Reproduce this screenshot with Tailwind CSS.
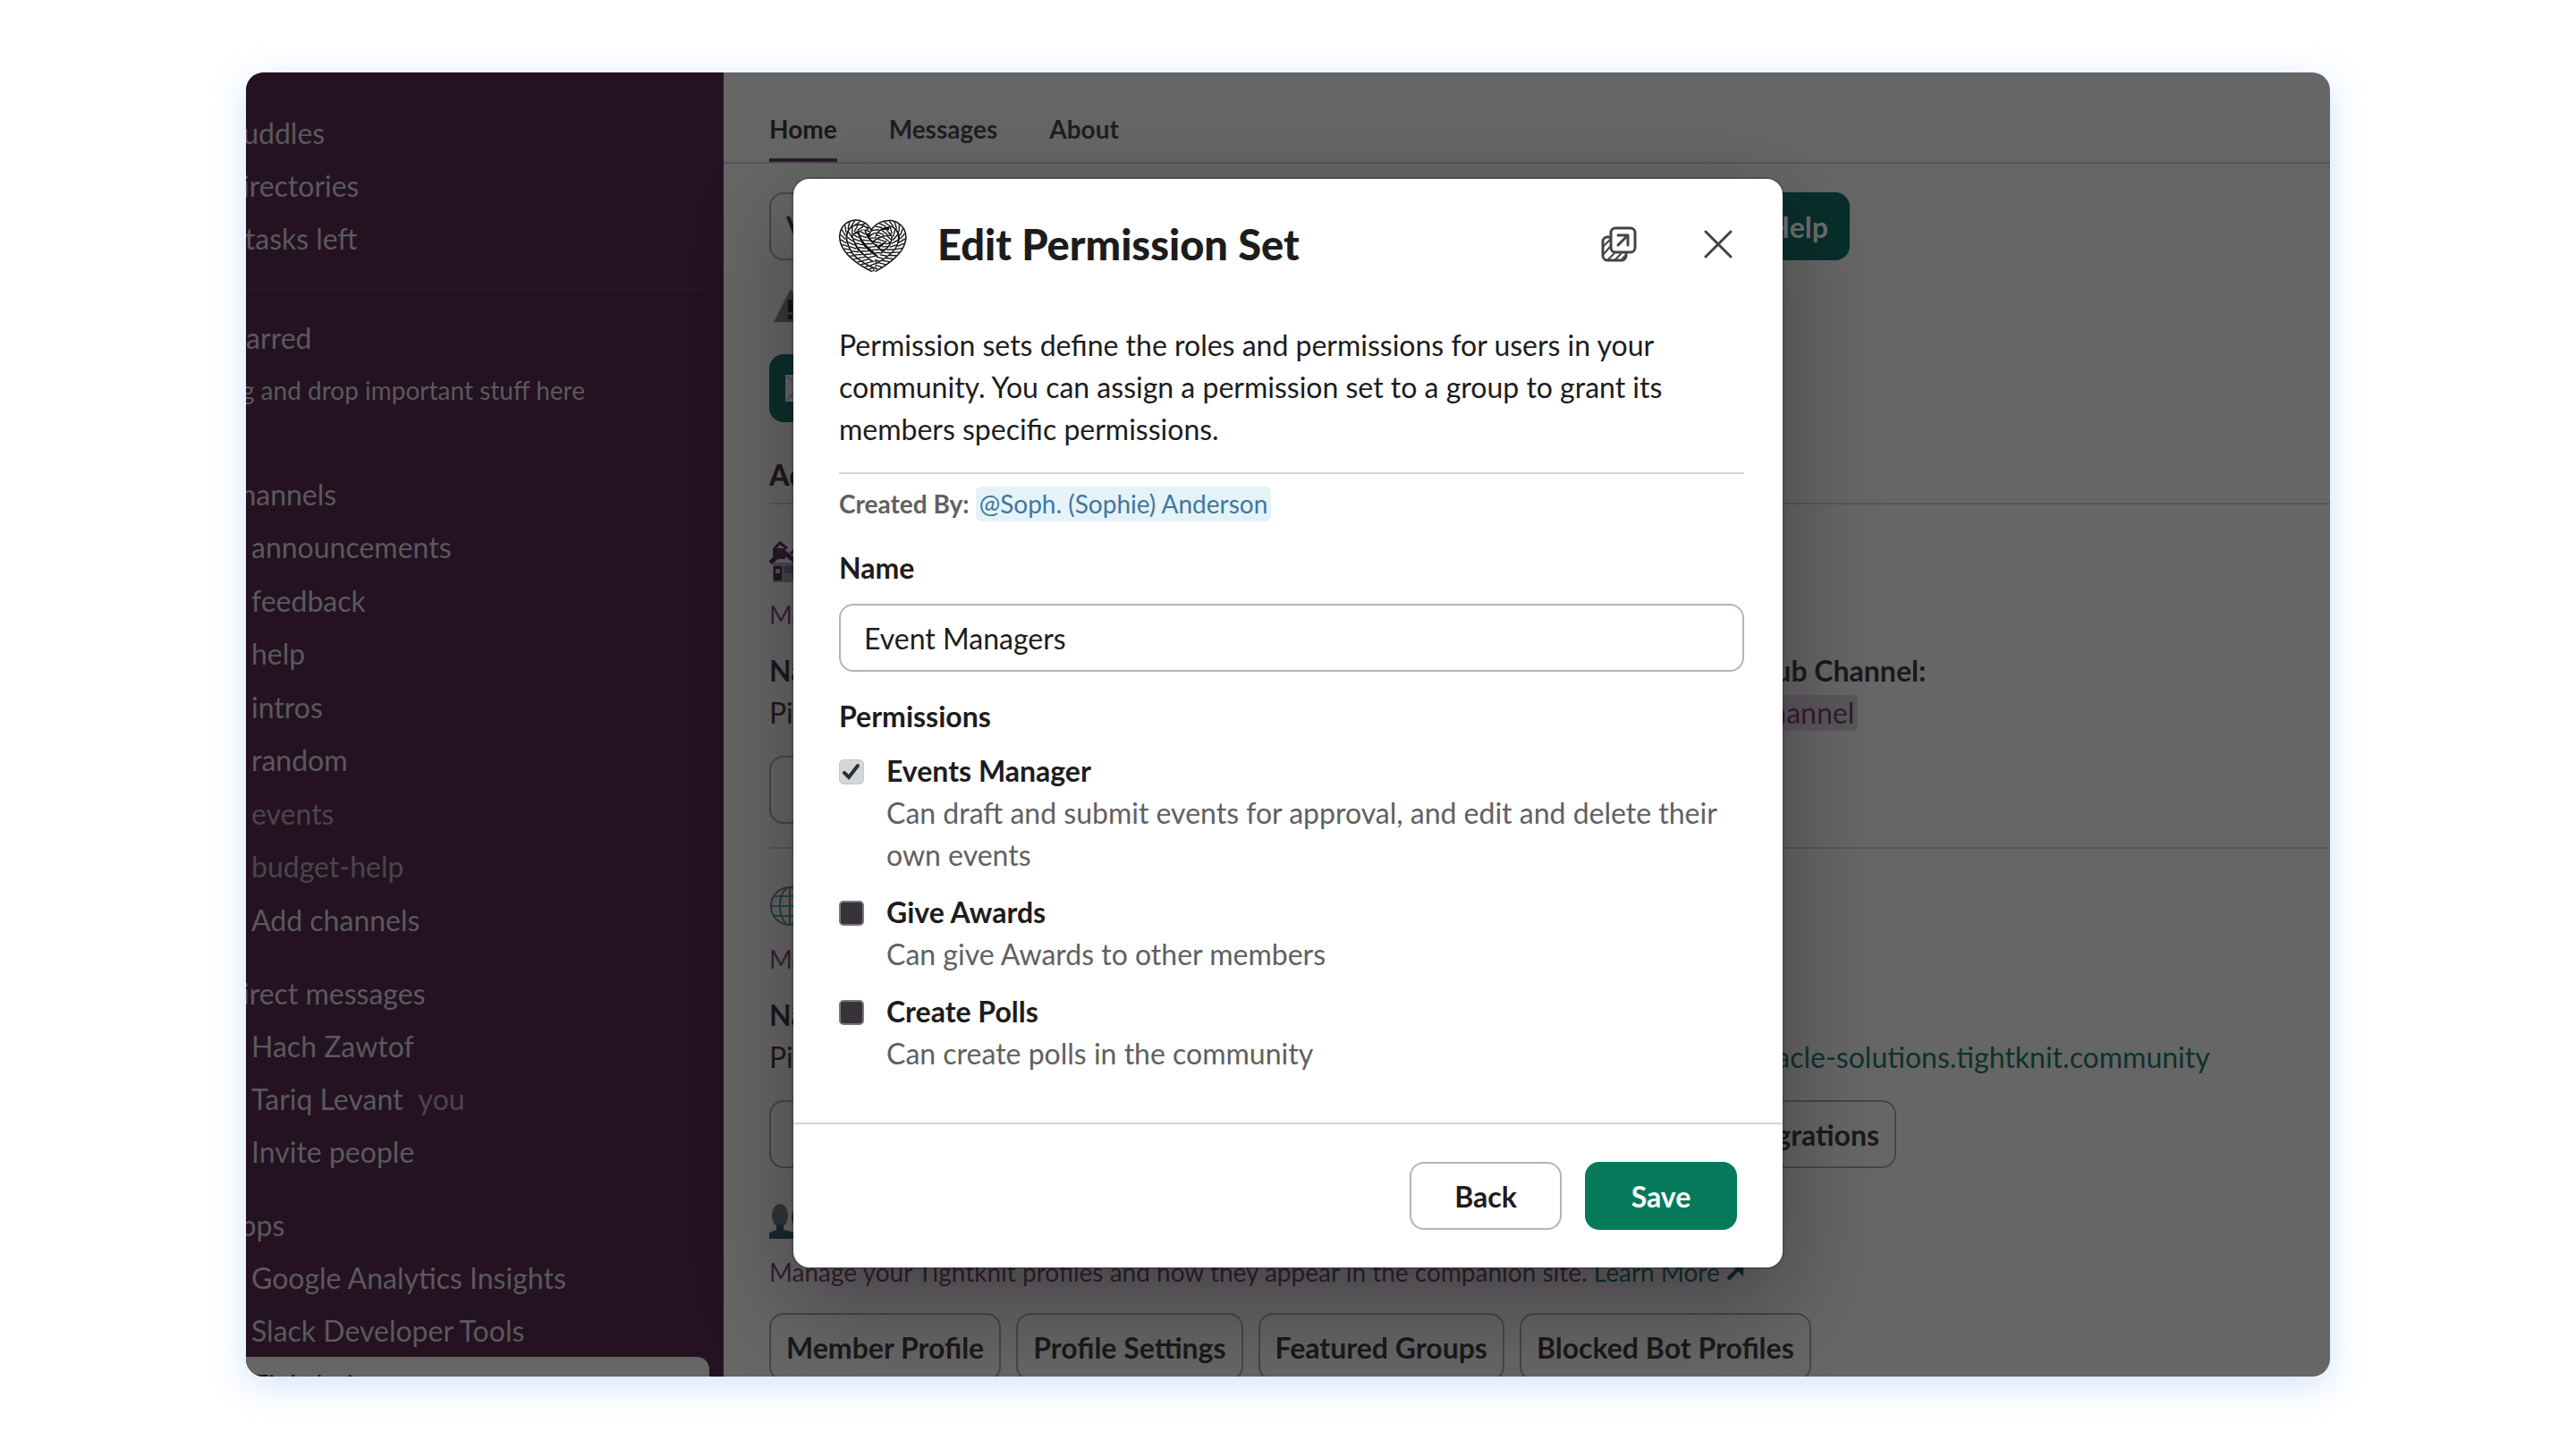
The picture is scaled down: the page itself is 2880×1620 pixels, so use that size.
<!DOCTYPE html>
<html lang="en">
<head>
  <meta charset="UTF-8">
  <meta name="viewport" content="width=device-width, initial-scale=1.0">
  <title>Edit Permission Set</title>
  <script src="https://cdn.jsdelivr.net/npm/@tailwindcss/browser@4"></script>
</head>
<body class="bg-white h-screen px-[275px] py-[81px] font-['Lato',sans-serif] text-[32px] leading-[47px]">

  <div class="relative h-full flex overflow-hidden rounded-[20px] bg-[#666666] text-[#1a191b] shadow-[0_10px_40px_rgba(96,155,250,0.28)]">

    <!-- Sidebar -->
    <nav class="w-[534px] shrink-0 bg-[#241222] text-[#5b595b] pt-[38px] overflow-hidden whitespace-nowrap">
      <ul class="-ml-7">
        <li class="h-[59px] flex items-center">Huddles</li>
        <li class="h-[59px] flex items-center">Directories</li>
        <li class="h-[59px] flex items-center">2 tasks left</li>
      </ul>
      <hr class="mt-[27px] mb-[23px] mr-6 border-t-2 border-[#2a1829]">

      <section>
        <h2 class="h-[59px] flex items-center -ml-7">Starred</h2>
        <p class="h-[59px] flex items-center -ml-[50px] text-[28px]">Drag and drop important stuff here</p>
      </section>

      <section class="mt-[57px]">
        <h2 class="h-[59px] flex items-center -ml-7">Channels</h2>
        <ul class="h-[476px] grid items-center pl-[6px]">
          <li>announcements</li>
          <li>feedback</li>
          <li>help</li>
          <li>intros</li>
          <li>random</li>
          <li class="text-[#4a464a]">events</li>
          <li class="text-[#4a464a]">budget-help</li>
          <li>Add channels</li>
        </ul>
      </section>

      <section class="mt-[23px]">
        <h2 class="h-[59px] flex items-center -ml-7">Direct messages</h2>
        <ul class="pl-[6px]">
          <li class="h-[59px] flex items-center">Hach Zawtof</li>
          <li class="h-[59px] flex items-center gap-[17px]">Tariq Levant <span class="text-[#4a464a]">you</span></li>
          <li class="h-[59px] flex items-center">Invite people</li>
        </ul>
      </section>

      <section class="mt-[23px]">
        <h2 class="h-[59px] flex items-center -ml-7">Apps</h2>
        <ul>
          <li class="h-[59px] flex items-center pl-[6px]">Google Analytics Insights</li>
          <li class="h-[59px] flex items-center pl-[6px]">Slack Developer Tools</li>
          <li class="h-[62px] flex items-center pl-[6px] mr-[16px] rounded-r-[14px] bg-[#666666] text-[#1a191b]">Tightknit</li>
        </ul>
      </section>
    </nav>

    <!-- App home -->
    <main class="flex-1 min-w-0 overflow-hidden whitespace-nowrap">
      <div class="h-[102px] pl-[51px] flex items-end gap-[58px] border-b-2 border-[#555456] text-[28px] font-bold">
        <a href="#" class="h-[60px] border-b-4 border-[#2f1a2f]">Home</a>
        <a href="#" class="h-[60px] text-[#211d22]">Messages</a>
        <a href="#" class="h-[60px] text-[#211d22]">About</a>
      </div>

      <div class="pl-[51px]">
        <div class="mt-8 w-[1208px] flex justify-between font-bold">
          <button class="h-[76px] px-[17px] rounded-[16px] border-2 border-[#474547]">View Site</button>
          <button class="h-[76px] px-6 rounded-[16px] bg-[#082f2a] text-[#6b6f6e]">Get Help</button>
        </div>

        <div class="mt-[27px] h-[47px] flex items-center">
          <svg class="w-[46px] h-[40px]" viewBox="0 0 46 40"><path d="M24 1 44 38H5Z" fill="#39363a"/><path d="M21 13h5v14h-5zM21 30h5v5h-5z" fill="#111"/></svg>
        </div>

        <button class="mt-[31px] h-[76px] w-[320px] pl-[18px] rounded-[16px] bg-[#082f2a] flex items-center">
          <svg class="w-[44px] h-[30px]" viewBox="0 0 44 30"><path d="M0 0h44v30H0z" fill="#6a686b"/><path d="M2 2 22 18 42 2M2 28 16 14M42 28 28 14" fill="none" stroke="#504e52" stroke-width="2"/></svg>
        </button>

        <h2 class="mt-[35px] pb-2 border-b-2 border-[#565557] font-black">Admin</h2>

        <section class="pt-[40px]">
          <div class="h-[47px] flex items-center">
            <svg class="w-[60px] h-[46px]" viewBox="0 0 60 46">
              <g fill="none" stroke="#251525" stroke-width="5"><path d="M6 8 12 2 20 8M24 14 34 4 44 14" stroke-width="3"/><path d="M1 24 16 12 31 24 46 12 59 24"/></g>
              <path d="M4 8h14v12H4z" fill="#251a26"/><path d="M4 24h24v22H4z" fill="#494549"/><path d="M5 28h9v16H5z" fill="#1a181b"/><path d="M7 31h5v5H7z" fill="#555"/><path d="M17 28h10v8H17z" fill="#32303c"/>
            </svg>
          </div>
          <p class="mt-[13px] text-[28px] text-[#302332]">Manage your community channels.</p>
          <div class="mt-[15px] grid grid-cols-[1100px_1fr]">
            <div><b>Name:</b><br>Pinnacle Solutions</div>
            <div><b>Hub Channel:</b><br><span class="inline-block h-10 leading-[40px] px-1 rounded-[6px] bg-[#5a575b] text-[#301c32]">channel</span></div>
          </div>
          <button class="mt-[25px] h-[76px] w-[300px] rounded-[16px] border-2 border-[#474547] font-bold">Edit</button>
        </section>
        <hr class="mt-[26px] border-t-2 border-[#565557]">

        <section class="pt-[40px]">
          <div class="h-[47px] flex items-center">
            <svg class="w-[46px] h-[46px]" viewBox="0 0 46 46" fill="none" stroke="#2d3738" stroke-width="2"><circle cx="23" cy="23" r="21"/><ellipse cx="23" cy="23" rx="11" ry="21"/><path d="M23 2v42"/><path d="M2 23h42M6 12h34M6 34h34" stroke="#164d43"/></svg>
          </div>
          <p class="mt-[13px] text-[28px] text-[#302332]">Manage your companion site.</p>
          <div class="mt-[15px] grid grid-cols-[1064px_1fr]">
            <div><b>Name:</b><br>Pinnacle Solutions</div>
            <div><b>URL:</b><br><a href="#" class="text-[#0c322c]">pinnacle-solutions.tightknit.community</a></div>
          </div>
          <div class="mt-[25px] w-[1260px] flex justify-between font-bold">
            <button class="h-[76px] w-[300px] rounded-[16px] border-2 border-[#474547]">Site</button>
            <button class="h-[76px] px-[17px] rounded-[16px] border-2 border-[#474547]">Integrations</button>
          </div>
        </section>

        <section class="pt-[32px]">
          <div class="h-[47px] flex items-end">
            <svg class="w-[46px] h-[40px]" viewBox="0 0 46 40" fill="#14292b"><ellipse cx="12" cy="14" rx="9" ry="13" fill="#2f3537"/><path d="M8 24h8v6l14 3v7H0v-7l8-3z"/><ellipse cx="34" cy="16" rx="9" ry="12"/></svg>
          </div>
          <p class="mt-[14px] text-[28px] text-[#2d1f2e]">Manage your Tightknit profiles and how they appear in the companion site. <a href="#" class="text-[#0c322c]">Learn More <svg class="inline w-[20px] h-[20px] -mt-2" viewBox="0 0 20 20"><path d="M2 18 14 6" stroke="#0c2422" stroke-width="4"/><path d="M6 2h13v13z" fill="#0c2422"/></svg></a></p>
          <div class="mt-[22px] flex gap-[17px] font-bold">
            <button class="h-[76px] px-[17px] rounded-[16px] border-2 border-[#474547]">Member Profile</button>
            <button class="h-[76px] px-[17px] rounded-[16px] border-2 border-[#474547]">Profile Settings</button>
            <button class="h-[76px] px-[17px] rounded-[16px] border-2 border-[#474547]">Featured Groups</button>
            <button class="h-[76px] px-[17px] rounded-[16px] border-2 border-[#474547]">Blocked Bot Profiles</button>
          </div>
        </section>
      </div>
    </main>

    <!-- Modal -->
    <div class="absolute inset-0 flex items-center justify-center pb-[3px]">
      <form class="w-[1106px] bg-white rounded-[18px] text-[#1d1c1d] shadow-[0_0_0_2px_rgba(29,28,29,0.2),0_38px_102px_rgba(20,10,22,0.38)]" onsubmit="return false">
        <header class="h-[162px] pt-[18px] pl-[51px] pr-[56px]">
          <div class="h-[110px] flex items-center">
            <svg id="logo" class="mt-1 w-[76px] h-[62px]" viewBox="14 18 228 184"></svg>
            <h1 class="ml-[34px] text-[47px] leading-[56px] font-black">Edit Permission Set</h1>
            <button type="button" aria-label="Open in new window" class="ml-auto">
              <svg class="w-10 h-10" viewBox="0 0 40 40" fill="none" stroke="#454245" stroke-width="3" stroke-linecap="round" stroke-linejoin="round">
                <path d="M9 12H7a5 5 0 0 0-5 5v16a5 5 0 0 0 5 5h16a5 5 0 0 0 5-5v-2"/>
                <path d="M3 22 10 15M3 31 10 23M8 37 15 30M16 37 22 31M24 36 27 33" stroke-width="2"/>
                <rect x="11" y="2" width="27" height="27" rx="5"/>
                <path d="M19 10h11v11M30 10 19 21"/>
              </svg>
            </button>
            <button type="button" aria-label="Close" class="ml-[75px]">
              <svg class="w-8 h-8" viewBox="0 0 32 32" fill="none" stroke="#454245" stroke-width="3" stroke-linecap="round"><path d="M2 2 30 30M30 2 2 30"/></svg>
            </button>
          </div>
        </header>

        <div class="pl-[51px] pr-[43px]">
          <p>Permission sets define the roles and permissions for users in your community. You can assign a permission set to a group to grant its members specific permissions.</p>
          <hr class="mt-[25px] border-t-2 border-[#d3d7da]">
          <p class="mt-[10px] text-[28px] text-[#616061]"><b>Created By:</b> <a href="#" class="inline-block h-[39px] leading-[39px] px-1 rounded-[6px] bg-[#e5f3f9] text-[#3f779d]">@Soph. (Sophie) Anderson</a></p>

          <label for="name" class="block mt-6 font-bold">Name</label>
          <input id="name" type="text" value="Event Managers" class="block mt-[17px] w-full h-[76px] px-[26px] rounded-[16px] border-2 border-[#b0b6b8]">

          <fieldset class="mt-[26px]">
            <legend class="font-bold">Permissions</legend>
            <div class="mt-[14px] flex flex-col gap-[17px]">
              <div class="flex gap-[25px]">
                <div class="relative mt-[11px] w-7 h-7 shrink-0">
                  <input id="events" type="checkbox" checked class="block appearance-none w-7 h-7 rounded-[5px] border border-[#c3cacc] bg-[#d2d6d8]">
                  <svg class="absolute inset-0 w-7 h-7 pointer-events-none" viewBox="0 0 28 28"><path d="M6 15 11 20 21 7" fill="none" stroke="#2f2c33" stroke-width="4" stroke-linecap="round"/></svg>
                </div>
                <label for="events"><b>Events Manager</b><span class="block text-[#616061]">Can draft and submit events for approval, and edit and delete their own events</span></label>
              </div>
              <div class="flex gap-[25px]">
                <input id="awards" type="checkbox" class="appearance-none mt-[11px] w-7 h-7 shrink-0 rounded-[5px] border-2 border-[#78777a] bg-[#383239]">
                <label for="awards"><b>Give Awards</b><span class="block text-[#616061]">Can give Awards to other members</span></label>
              </div>
              <div class="flex gap-[25px]">
                <input id="polls" type="checkbox" class="appearance-none mt-[11px] w-7 h-7 shrink-0 rounded-[5px] border-2 border-[#78777a] bg-[#383239]">
                <label for="polls"><b>Create Polls</b><span class="block text-[#616061]">Can create polls in the community</span></label>
              </div>
            </div>
          </fieldset>
        </div>

        <footer class="mt-[54px] pt-[42px] pb-[42px] px-[51px] flex justify-end gap-[26px] border-t-2 border-[#d3d7da] font-bold">
          <button type="button" class="w-[170px] h-[76px] rounded-[16px] border-2 border-[#b0b6b8]">Back</button>
          <button type="submit" class="w-[170px] h-[76px] rounded-[16px] bg-[#057a5b] text-white">Save</button>
        </footer>
      </form>
    </div>
  </div>

  <script>
    // rope heart: every strand is a black outline, a white core and slanted twists
    const strands = [
      { d: 'M122 88 C140 70 160 62 186 66', slant: 40 },
      { d: 'M126 112 C145 92 165 84 192 86', slant: 40 },
      { d: 'M140 134 C160 122 172 112 182 100', slant: 40 },
      { d: 'M126 76 C134 46 165 33 190 36 C220 42 234 70 224 98 C216 126 188 154 130 186', slant: 45 },
      { d: 'M182 54 C208 62 206 92 194 112 C178 134 156 148 126 162', slant: 45 },
      { d: 'M114 66 C102 38 78 31 60 36 C34 42 22 68 30 96 C40 128 78 160 130 186', slant: -45 },
      { d: 'M104 62 C92 46 68 46 56 62 C46 78 52 104 68 128 C86 148 108 162 136 174', slant: -45 },
      { d: 'M68 70 C74 92 88 116 106 132 C114 140 126 148 136 154', slant: -45 },
      { d: 'M90 58 C94 80 108 98 126 113 C136 121 144 128 152 138', slant: -45 }
    ];
    const svg = document.getElementById('logo');

    function draw(d, color, width) {
      const p = document.createElementNS('http://www.w3.org/2000/svg', 'path');
      p.setAttribute('d', d);
      p.setAttribute('fill', 'none');
      p.setAttribute('stroke', color);
      p.setAttribute('stroke-width', width);
      svg.appendChild(p);
      return p;
    }

    draw('M128 194 C70 170 22 120 22 76 C22 34 90 18 124 64 C160 18 232 34 232 78 C232 120 186 170 128 194Z', '#111', 4).setAttribute('fill', '#111');
    strands.forEach(({ d, slant }) => {
      draw(d, '#111', 27);
      const core = draw(d, '#fff', 18);
      const length = core.getTotalLength();
      for (let s = 6; s < length; s += 15) {
        const a = core.getPointAtLength(s - 1);
        const b = core.getPointAtLength(s + 1);
        const angle = Math.atan2(b.y - a.y, b.x - a.x) + slant * Math.PI / 180;
        const dx = Math.cos(angle) * 12;
        const dy = Math.sin(angle) * 12;
        draw(`M${b.x - dx} ${b.y - dy} L${b.x + dx} ${b.y + dy}`, '#111', 4);
      }
    });
  </script>

</body>
</html>
